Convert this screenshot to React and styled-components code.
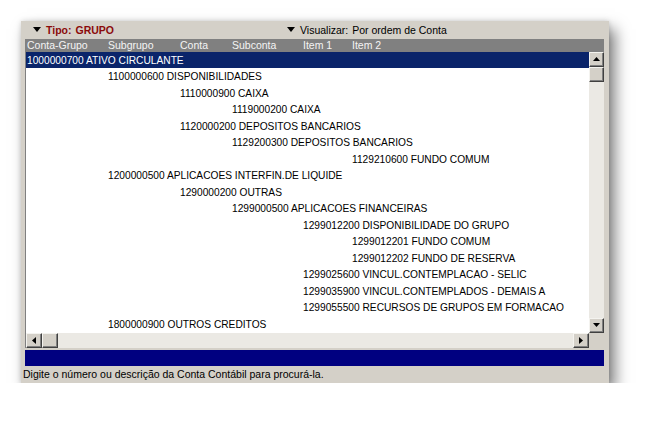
import React from "react";
import styled, { createGlobalStyle } from "styled-components";

const GlobalStyle = createGlobalStyle`
  body {
    margin: 0;
    background: #ffffff;
    font-family: "Liberation Sans", Arial, sans-serif;
  }
`;

const rows = [
  { level: 0, text: "1000000700 ATIVO CIRCULANTE", selected: true },
  { level: 1, text: "1100000600 DISPONIBILIDADES" },
  { level: 2, text: "1110000900 CAIXA" },
  { level: 3, text: "1119000200 CAIXA" },
  { level: 2, text: "1120000200 DEPOSITOS BANCARIOS" },
  { level: 3, text: "1129200300 DEPOSITOS BANCARIOS" },
  { level: 5, text: "1129210600 FUNDO COMUM" },
  { level: 1, text: "1200000500 APLICACOES INTERFIN.DE LIQUIDE" },
  { level: 2, text: "1290000200 OUTRAS" },
  { level: 3, text: "1299000500 APLICACOES FINANCEIRAS" },
  { level: 4, text: "1299012200 DISPONIBILIDADE DO GRUPO" },
  { level: 5, text: "1299012201 FUNDO COMUM" },
  { level: 5, text: "1299012202 FUNDO DE RESERVA" },
  { level: 4, text: "1299025600 VINCUL.CONTEMPLACAO - SELIC" },
  { level: 4, text: "1299035900 VINCUL.CONTEMPLADOS - DEMAIS A" },
  { level: 4, text: "1299055500 RECURSOS DE GRUPOS EM FORMACAO" },
  { level: 1, text: "1800000900 OUTROS CREDITOS" },
];

// x offset of each tree level inside the list
const indents = [2, 83, 155, 207, 278, 327];

const columns = ["Conta-Grupo", "Subgrupo", "Conta", "Subconta", "Item 1", "Item 2"];

function Triangle() {
  return (
    <svg width="8" height="5" viewBox="0 0 8 5">
      <polygon points="0,0 8,0 4,5" fill="#000" />
    </svg>
  );
}

function SmallArrow({ dir }) {
  const points = {
    up: "0,4 7,4 3.5,0",
    down: "0,0 7,0 3.5,4",
    left: "4,0 4,7 0,3.5",
    right: "0,0 0,7 4,3.5",
  }[dir];
  const vertical = dir === "down" || dir === "up";
  return (
    <svg width={vertical ? 7 : 4} height={vertical ? 4 : 7} viewBox={vertical ? "0 0 7 4" : "0 0 4 7"}>
      <polygon points={points} fill="#000" />
    </svg>
  );
}

export default function App() {
  return (
    <>
      <GlobalStyle />
      <Window>
        <TopBar>
          <Filter $width={254}>
            <Triangle />
            <TipoLabel>Tipo:</TipoLabel>
            <TipoLabel>GRUPO</TipoLabel>
          </Filter>
          <Filter>
            <Triangle />
            <span>Visualizar:</span>
            <span>Por ordem de Conta</span>
          </Filter>
        </TopBar>
        <Panel>
          <Header>
            {columns.map((c) => (
              <HeaderCell key={c}>{c}</HeaderCell>
            ))}
          </Header>
          <Body>
            <List>
              {rows.map((r) => (
                <Row key={r.text} $selected={r.selected} $indent={indents[r.level]}>
                  {r.text}
                </Row>
              ))}
            </List>
            <VScroll>
              <ScrollButton>
                <SmallArrow dir="up" />
              </ScrollButton>
              <ScrollButton />
              <Track />
              <ScrollButton>
                <SmallArrow dir="down" />
              </ScrollButton>
            </VScroll>
          </Body>
          <HScrollRow>
            <HScroll>
              <ScrollButton>
                <SmallArrow dir="left" />
              </ScrollButton>
              <ScrollButton />
              <Track />
              <ScrollButton>
                <SmallArrow dir="right" />
              </ScrollButton>
            </HScroll>
            <Corner />
          </HScrollRow>
          <BlueBar />
        </Panel>
        <Status>Digite o número ou descrição da Conta Contábil para procurá-la.</Status>
      </Window>
    </>
  );
}

const Window = styled.div`
  margin: 21px 0 0 21px;
  width: 588px;
  height: 362px;
  background: #d4d0c8;
  display: flex;
  flex-direction: column;
  box-shadow: 6px 8px 14px rgba(0, 0, 0, 0.5), 0 0 5px rgba(0, 0, 0, 0.15);
  font-size: 10.5px;
  color: #000;
`;

const TopBar = styled.div`
  height: 18px;
  display: flex;
  align-items: center;
  padding-left: 12px;
`;

const Filter = styled.div`
  display: flex;
  align-items: center;
  gap: 4px;
  width: ${(p) => (p.$width ? `${p.$width}px` : "auto")};

  svg {
    margin-right: 1px;
  }
`;

const TipoLabel = styled.span`
  color: #8b0a0a;
  font-weight: bold;
`;

const Panel = styled.div`
  margin: 0 5px 0 4px;
  display: flex;
  flex-direction: column;
`;

const Header = styled.div`
  height: 13px;
  background: #808080;
  color: #f4f4f4;
  display: grid;
  grid-template-columns: 81px 72px 52px 71px 49px 1fr;
  align-items: center;
  padding-left: 2px;
  line-height: 13px;
`;

const HeaderCell = styled.div`
  white-space: nowrap;
`;

const Body = styled.div`
  height: 281px;
  display: flex;
`;

const List = styled.div`
  flex: 1;
  background: #ffffff;
  border-left: 1px solid #808080;
  overflow: hidden;
  font-size: 10.2px;
`;

const Row = styled.div`
  height: 16.5px;
  box-sizing: border-box;
  padding-top: 2px;
  line-height: 14.5px;
  padding-left: ${(p) => p.$indent - 1}px;
  white-space: nowrap;
  background: ${(p) => (p.$selected ? "#0a246a" : "transparent")};
  color: ${(p) => (p.$selected ? "#ffffff" : "#000")};
`;

const VScroll = styled.div`
  width: 15px;
  display: flex;
  flex-direction: column;
  background: #ebe9e4;
`;

const ScrollButton = styled.div`
  width: 15px;
  height: 15px;
  box-sizing: border-box;
  background: #d4d0c8;
  border-top: 1px solid #f4f3ef;
  border-left: 1px solid #f4f3ef;
  border-right: 1px solid #404040;
  border-bottom: 1px solid #404040;
  box-shadow: inset -1px -1px 0 #808080;
  display: flex;
  align-items: center;
  justify-content: center;
  flex-shrink: 0;
`;

const Track = styled.div`
  flex: 1;
  background: #ebe9e4;
`;

const HScrollRow = styled.div`
  height: 15px;
  display: flex;
`;

const HScroll = styled.div`
  flex: 1;
  display: flex;
  background: #ebe9e4;
  border-left: 1px solid #808080;

  ${ScrollButton} {
    width: 16px;
  }
`;

const Corner = styled.div`
  width: 15px;
  background: #d4d0c8;
`;

const BlueBar = styled.div`
  margin-top: 2px;
  height: 16px;
  background: #000080;
`;

const Status = styled.div`
  height: 18px;
  display: flex;
  align-items: center;
  padding-left: 2px;
  white-space: nowrap;
`;
